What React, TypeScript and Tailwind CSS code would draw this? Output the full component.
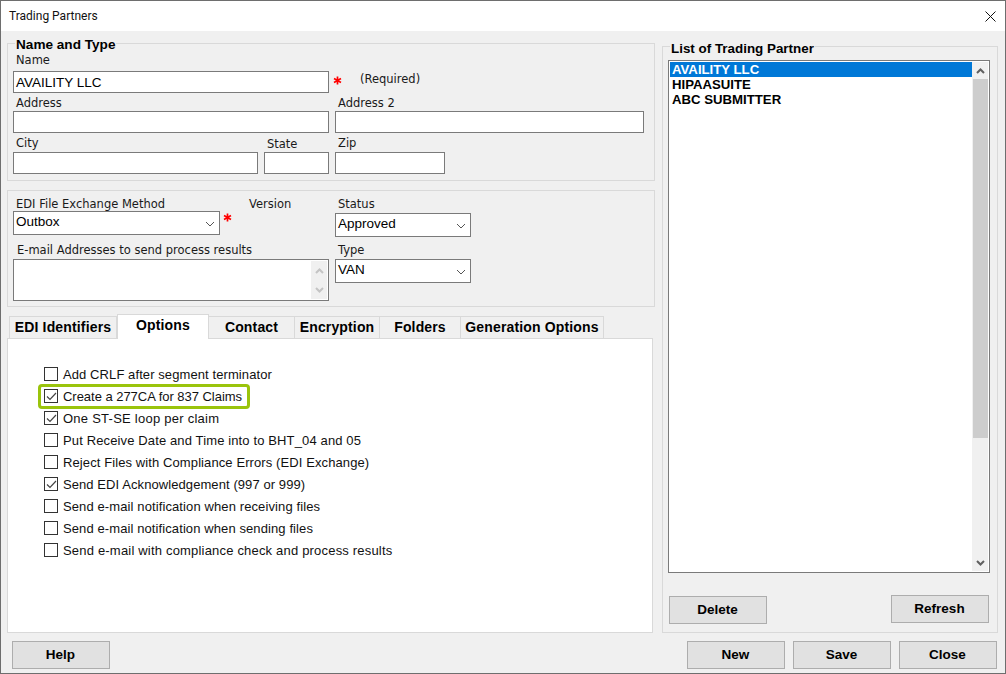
const labelFont = "font-['DejaVu_Sans',sans-serif] text-[11.5px] text-[#1a1a1a]"
const valueFont = "font-['Liberation_Sans',sans-serif] text-[13.5px] text-black"
const boldFont = "font-['Liberation_Sans',sans-serif] font-bold text-black"

const Label = ({ text, className }: { text: string; className: string }) => (
    <div className={`${labelFont} whitespace-nowrap ${className}`}>{text}</div>
)

const Input = ({ className, value }: { className: string; value?: string }) => (
    <div className={`${valueFont} h-[22px] shrink-0 border border-[#7a7a7a] bg-white pl-[2px] leading-[21px] ${className}`}>
        {value}
    </div>
)

const Star = ({ className }: { className: string }) => (
    <svg viewBox="0 0 9 9" className={`h-[9px] w-[9px] shrink-0 ${className}`}>
        <path d="M4.5 0.5v8M1 2.5l7 4M8 2.5l-7 4" stroke="#ff0000" strokeWidth="1.7" fill="none" />
    </svg>
)

const Select = ({ className, value }: { className: string; value: string }) => (
    <div className={`${valueFont} flex h-[24px] shrink-0 items-center justify-between border border-[#7a7a7a] bg-white pl-[2px] pr-[4px] ${className}`}>
        <span className="mb-px">{value}</span>
        <svg viewBox="0 0 10 6" className="mt-[2px] h-[6px] w-[10px]">
            <path d="M1 1l4 4 4-4" stroke="#555" strokeWidth="1" fill="none" />
        </svg>
    </div>
)

const ScrollArrow = ({ up, color = '#606060' }: { up?: boolean; color?: string }) => (
    <svg viewBox="0 0 9 6" className="h-[6px] w-[9px]">
        <path d={up ? 'M1 5l3.5-3.5L8 5' : 'M1 1l3.5 3.5L8 1'} stroke={color} strokeWidth="2" fill="none" />
    </svg>
)

const Button = ({ text, className }: { text: string; className?: string }) => (
    <div className={`${boldFont} flex h-[28px] w-[98px] shrink-0 items-center justify-center border border-[#adadad] bg-[#e1e1e1] pr-px pt-px text-[13.5px] ${className ?? ''}`}>
        {text}
    </div>
)

const Tab = ({ text, className, active }: { text: string; className: string; active?: boolean }) => (
    <div
        className={`${boldFont} flex shrink-0 justify-center border-t border-r border-[#d9d9d9] text-[14px] leading-[18px] tracking-[0.15px] ${
            active ? 'relative z-10 -mb-px h-[25px] border-l bg-white pt-px' : 'h-[22px] bg-[#f0f0f0] pt-px'
        } ${className}`}
    >
        {text}
    </div>
)

const OptionRow = ({ text, checked, highlight, tracking }: { text: string; checked?: boolean; highlight?: boolean; tracking: string }) => (
    <div className="relative flex h-[22px] items-center gap-[5px]">
        {highlight && (
            <div className="absolute left-[-6px] top-[-1px] h-[25px] w-[212px] rounded-[4px] border-[3px] border-[#9ac40c]" />
        )}
        <div className="flex h-[14px] w-[14px] shrink-0 items-center justify-center border border-[#333] bg-white">
            {checked && (
                <svg viewBox="0 0 11 9" className="h-[9px] w-[11px]">
                    <path d="M1 4.5l3 3 6-6.5" stroke="#444" strokeWidth="1.2" fill="none" />
                </svg>
            )}
        </div>
        <span className={`font-['Liberation_Sans',sans-serif] mt-px whitespace-nowrap text-[13px] text-[#111] ${tracking}`}>{text}</span>
    </div>
)

const options = [
    { text: 'Add CRLF after segment terminator', tracking: 'tracking-[0.09px]' },
    { text: 'Create a 277CA for 837 Claims', checked: true, highlight: true, tracking: 'tracking-[-0.03px]' },
    { text: 'One ST-SE loop per claim', checked: true, tracking: 'tracking-[0.25px]' },
    { text: 'Put Receive Date and Time into to BHT_04 and 05', tracking: 'tracking-[0.13px]' },
    { text: 'Reject Files with Compliance Errors (EDI Exchange)', tracking: 'tracking-[0.1px]' },
    { text: 'Send EDI Acknowledgement (997 or 999)', checked: true, tracking: 'tracking-[0.08px]' },
    { text: 'Send e-mail notification when receiving files', tracking: 'tracking-[0.11px]' },
    { text: 'Send e-mail notification when sending files', tracking: 'tracking-[0.1px]' },
    { text: 'Send e-mail with compliance check and process results', tracking: 'tracking-[0.19px]' },
]

const App = () => {
    return (
        <div className="flex h-[674px] w-[1006px] flex-col overflow-hidden border border-[#6e6e6e] bg-[#f0f0f0]">
            {/* Title bar */}
            <div className="flex h-[30px] shrink-0 items-center justify-between bg-white pl-[8px] pr-[9px]">
                <span className="font-['Roboto',sans-serif] text-[12px] text-[#111]">Trading Partners</span>
                <svg viewBox="0 0 11 11" className="h-[11px] w-[11px]">
                    <path d="M0.5 0.5l10 10M10.5 0.5l-10 10" stroke="#111" strokeWidth="1" fill="none" />
                </svg>
            </div>

            <div className="flex min-h-0 flex-1">
                {/* Left column */}
                <div className="ml-[6px] flex w-[648px] shrink-0 flex-col pt-[12px]">
                    {/* Name and Type */}
                    <div className="relative h-[138px] shrink-0 border border-[#d9d9d9] pl-[5px] pt-[10px]">
                        <div className={`${boldFont} absolute left-[7px] top-[-6px] bg-[#f0f0f0] px-px text-[13.6px] leading-[14px]`}>
                            Name and Type
                        </div>
                        <Label text="Name" className="h-[17px] pl-[3px] leading-[13px]" />
                        <div className="flex items-center">
                            <Input className="w-[316px]" value="AVAILITY LLC" />
                            <Star className="ml-[4px] mt-[-4px]" />
                            <Label text="(Required)" className="ml-[18px] mt-[-5px]" />
                        </div>
                        <div className="flex">
                            <Label text="Address" className="h-[18px] w-[322px] pl-[3px] leading-[21px]" />
                            <Label text="Address 2" className="h-[18px] pl-[3px] leading-[21px]" />
                        </div>
                        <div className="flex gap-[6px]">
                            <Input className="w-[316px]" />
                            <Input className="w-[309px]" />
                        </div>
                        <div className="flex">
                            <Label text="City" className="h-[19px] w-[251px] pl-[3px] leading-[21px]" />
                            <Label text="State" className="h-[19px] w-[71px] pl-[3px] leading-[22px]" />
                            <Label text="Zip" className="h-[19px] pl-[3px] leading-[21px]" />
                        </div>
                        <div className="flex gap-[6px]">
                            <Input className="w-[245px]" />
                            <Input className="w-[65px]" />
                            <Input className="w-[110px]" />
                        </div>
                    </div>

                    {/* EDI method */}
                    <div className="mt-[9px] flex h-[117px] shrink-0 border border-[#d9d9d9] pl-[5px] pt-[5px]">
                        <div className="w-[322px] shrink-0">
                            <div className="flex h-[15px]">
                                <Label text="EDI File Exchange Method" className="w-[236px] pl-[3px] leading-[17px]" />
                                <Label text="Version" className="leading-[17px]" />
                            </div>
                            <div className="flex">
                                <Select className="w-[207px]" value="Outbox" />
                                <Star className="ml-[3px] mt-[2px]" />
                            </div>
                            <Label text="E-mail Addresses to send process results" className="h-[24px] pl-[4px] leading-[31px]" />
                            <div className="flex h-[42px] w-[316px] justify-end border border-[#7a7a7a] bg-white py-px pr-px">
                                <div className="flex w-[16px] flex-col items-center justify-between bg-[#f0f0f0] pb-[6px] pt-[7px]">
                                    <ScrollArrow up color="#c4c4c4" />
                                    <ScrollArrow color="#c4c4c4" />
                                </div>
                            </div>
                        </div>
                        <div>
                            <Label text="Status" className="h-[17px] pl-[3px] leading-[17px]" />
                            <Select className="w-[136px]" value="Approved" />
                            <Label text="Type" className="h-[22px] pl-[3px] leading-[27px]" />
                            <Select className="w-[136px]" value="VAN" />
                        </div>
                    </div>

                    {/* Tabs */}
                    <div className="mt-[7px] flex h-[24px] shrink-0 items-end pl-[2px]">
                        <Tab text="EDI Identifiers" className="w-[108px] border-l" />
                        <Tab text="Options" className="w-[92px]" active />
                        <Tab text="Contact" className="w-[86px]" />
                        <Tab text="Encryption" className="w-[85px]" />
                        <Tab text="Folders" className="w-[81px]" />
                        <Tab text="Generation Options" className="w-[143px]" />
                    </div>
                    <div className="mr-[2px] flex-1 border border-[#d9d9d9] bg-white pl-[36px] pt-[24px]">
                        {options.map((option) => (
                            <OptionRow key={option.text} {...option} />
                        ))}
                    </div>

                    <div className="flex h-[40px] shrink-0 pl-[5px] pt-[8px]">
                        <Button text="Help" />
                    </div>
                </div>

                {/* Right column */}
                <div className="ml-[7px] flex w-[336px] shrink-0 flex-col pt-[15px]">
                    <div className="relative flex-1 border border-[#d9d9d9] pl-[5px] pt-[13px]">
                        <div className={`${boldFont} absolute left-[7px] top-[-6px] bg-[#f0f0f0] px-px text-[13.4px] leading-[15px]`}>
                            List of Trading Partner
                        </div>
                        <div className="flex h-[513px] w-[322px] border border-[#7a7a7a] bg-white p-px">
                            <div className={`${boldFont} w-[302px] shrink-0 text-[13.2px] leading-[15px]`}>
                                <div className="bg-[#0078d7] pl-[2px] text-white">AVAILITY LLC</div>
                                <div className="pl-[2px]">HIPAASUITE</div>
                                <div className="pl-[2px]">ABC SUBMITTER</div>
                            </div>
                            <div className="flex flex-1 flex-col items-center bg-[#f0f0f0]">
                                <div className="flex h-[17px] shrink-0 items-center">
                                    <ScrollArrow up />
                                </div>
                                <div className="h-[359px] w-[15px] shrink-0 bg-[#cdcdcd]" />
                                <div className="flex-1" />
                                <div className="flex h-[17px] shrink-0 items-center">
                                    <ScrollArrow />
                                </div>
                            </div>
                        </div>
                        <div className="mt-[22px] flex w-[321px] items-start justify-between pl-px">
                            <Button text="Delete" className="mt-px" />
                            <Button text="Refresh" />
                        </div>
                    </div>
                    <div className="flex h-[40px] shrink-0 justify-end gap-[8px] pr-px pt-[8px]">
                        <Button text="New" />
                        <Button text="Save" />
                        <Button text="Close" />
                    </div>
                </div>
            </div>
        </div>
    )
}

export default App
